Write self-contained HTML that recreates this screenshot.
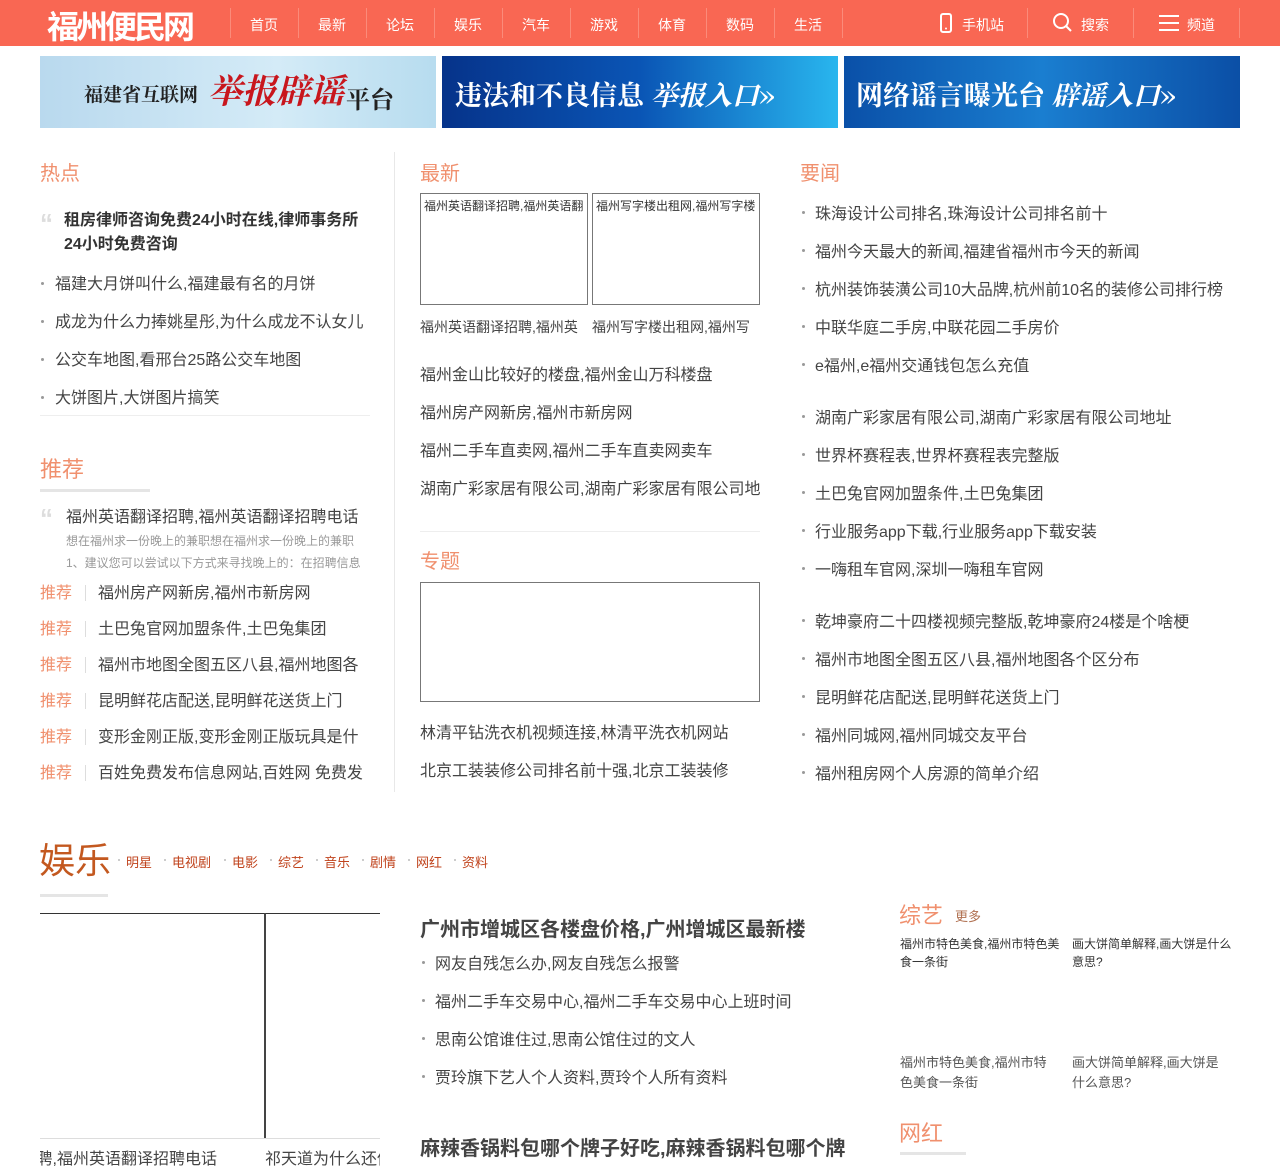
<!DOCTYPE html>
<html><head><meta charset="utf-8">
<style>
*{margin:0;padding:0;box-sizing:border-box}
body{width:1280px;height:1167px;position:relative;overflow:hidden;background:#fff;font-family:"Liberation Sans","Noto Sans CJK SC",sans-serif;color:#444}
.a{position:absolute;white-space:nowrap}
.hd{position:absolute;left:0;top:0;width:1280px;height:46px;background:#f96753}
.nav{color:#fff;font-size:14px;top:15px}
.sep{position:absolute;top:8px;width:1px;height:30px;background:#fb8b7a}
.t{font-size:20px;color:#f0906e;margin-top:-2px}
.li{font-size:16px;color:#444;margin-top:-3px}
.dot{position:absolute;width:3px;height:3px;border-radius:50%;background:#999}
.rec{font-size:16px;color:#f0906e;margin-top:-3px}
.bar{position:absolute;height:3px;background:#e5e5e5}
.sl{position:absolute;top:852px;font-size:13px;color:#c0431c}
.sd{position:absolute;top:859px;width:2px;height:2px;background:#ccc}
</style></head><body>
<div class="hd"></div>
<div class="a" style="left:47px;top:2px;font-size:32px;font-weight:bold;color:#fff;letter-spacing:-3px">福州便民网</div>
<div class="sep" style="left:230px"></div>
<div class="a nav" style="left:250px">首页</div><div class="sep" style="left:298px"></div>
<div class="a nav" style="left:318px">最新</div><div class="sep" style="left:366px"></div>
<div class="a nav" style="left:386px">论坛</div><div class="sep" style="left:434px"></div>
<div class="a nav" style="left:454px">娱乐</div><div class="sep" style="left:502px"></div>
<div class="a nav" style="left:522px">汽车</div><div class="sep" style="left:570px"></div>
<div class="a nav" style="left:590px">游戏</div><div class="sep" style="left:638px"></div>
<div class="a nav" style="left:658px">体育</div><div class="sep" style="left:706px"></div>
<div class="a nav" style="left:726px">数码</div><div class="sep" style="left:774px"></div>
<div class="a nav" style="left:794px">生活</div><div class="sep" style="left:842px"></div>
<svg class="a" style="left:939px;top:13px" width="14" height="20"><rect x="2" y="1" width="10" height="18" rx="2" fill="none" stroke="#fff" stroke-width="2"/><circle cx="7" cy="15.5" r="1" fill="#fff"/></svg>
<div class="a nav" style="left:962px">手机站</div><div class="sep" style="left:1027px"></div>
<svg class="a" style="left:1052px;top:12px" width="20" height="20"><circle cx="9" cy="9" r="7" fill="none" stroke="#fff" stroke-width="2"/><line x1="14" y1="14" x2="19" y2="19" stroke="#fff" stroke-width="2"/></svg>
<div class="a nav" style="left:1081px">搜索</div><div class="sep" style="left:1133px"></div>
<svg class="a" style="left:1158px;top:14px" width="22" height="18"><path d="M1 2H21M1 9H21M1 16H21" stroke="#fff" stroke-width="2"/></svg>
<div class="a nav" style="left:1187px">频道</div><div class="sep" style="left:1239px"></div>

<div class="a" style="left:40px;top:56px;width:396px;height:72px;background:linear-gradient(90deg,#b9d9ee,#d4ebf7 60%,#b7dcef)"></div>
<div class="a" style="left:84px;top:80px;font-size:19px;font-weight:bold;color:#222;font-family:'Noto Serif CJK SC',serif">福建省互联网</div>
<div class="a" style="left:208px;top:64px;font-size:34px;font-weight:bold;color:#c8161d;font-style:italic;font-family:'Noto Serif CJK SC',serif">举报辟谣</div>
<div class="a" style="left:346px;top:80px;font-size:24px;font-weight:bold;color:#222;font-family:'Noto Serif CJK SC',serif">平台</div>
<div class="a" style="left:442px;top:56px;width:396px;height:72px;background:linear-gradient(90deg,#06338a,#0a55b5 50%,#29b6ee)"></div>
<div class="a" style="left:455px;top:74px;font-size:27px;font-weight:bold;color:#fff;font-family:'Noto Serif CJK SC',serif">违法和不良信息 <i>举报入口</i>»</div>
<div class="a" style="left:844px;top:56px;width:396px;height:72px;background:linear-gradient(90deg,#0a50a8,#1a7ed0 50%,#0b4fa6)"></div>
<div class="a" style="left:856px;top:74px;font-size:27px;font-weight:bold;color:#fff;font-family:'Noto Serif CJK SC',serif">网络谣言曝光台 <i>辟谣入口</i>»</div>

<!-- left -->
<div class="a t" style="left:40px;top:159px">热点</div>
<div class="a" style="left:40px;top:208px;font-size:26px;color:#ddd;font-weight:bold">“</div>
<div class="a" style="left:64px;top:209px;font-size:16px;font-weight:bold;color:#333;line-height:24px">租房律师咨询免费24小时在线,律师事务所<br>24小时免费咨询</div>
<div class="dot" style="left:41px;top:282px"></div><div class="a li" style="left:55px;top:273px">福建大月饼叫什么,福建最有名的月饼</div>
<div class="dot" style="left:41px;top:320px"></div><div class="a li" style="left:55px;top:311px">成龙为什么力捧姚星彤,为什么成龙不认女儿</div>
<div class="dot" style="left:41px;top:358px"></div><div class="a li" style="left:55px;top:349px">公交车地图,看邢台25路公交车地图</div>
<div class="dot" style="left:41px;top:396px"></div><div class="a li" style="left:55px;top:387px">大饼图片,大饼图片搞笑</div>
<div class="a" style="left:40px;top:415px;width:330px;height:1px;background:#eee"></div>
<div class="a t" style="left:40px;top:454px;font-size:22px">推荐</div>
<div class="bar" style="left:40px;top:489px;width:110px"></div>
<div class="a" style="left:40px;top:503px;font-size:26px;color:#ddd;font-weight:bold">“</div>
<div class="a li" style="left:66px;top:506px">福州英语翻译招聘,福州英语翻译招聘电话</div>
<div class="a" style="left:66px;top:530px;font-size:12px;color:#999;line-height:22px">想在福州求一份晚上的兼职想在福州求一份晚上的兼职<br>1、建议您可以尝试以下方式来寻找晚上的：在招聘信息</div>
<div class="a rec" style="left:40px;top:582px">推荐</div><div class="a" style="left:85px;top:585px;width:1px;height:16px;background:#ddd"></div><div class="a li" style="left:98px;top:582px">福州房产网新房,福州市新房网</div>
<div class="a rec" style="left:40px;top:618px">推荐</div><div class="a" style="left:85px;top:621px;width:1px;height:16px;background:#ddd"></div><div class="a li" style="left:98px;top:618px">土巴兔官网加盟条件,土巴兔集团</div>
<div class="a rec" style="left:40px;top:654px">推荐</div><div class="a" style="left:85px;top:657px;width:1px;height:16px;background:#ddd"></div><div class="a li" style="left:98px;top:654px">福州市地图全图五区八县,福州地图各</div>
<div class="a rec" style="left:40px;top:690px">推荐</div><div class="a" style="left:85px;top:693px;width:1px;height:16px;background:#ddd"></div><div class="a li" style="left:98px;top:690px">昆明鲜花店配送,昆明鲜花送货上门</div>
<div class="a rec" style="left:40px;top:726px">推荐</div><div class="a" style="left:85px;top:729px;width:1px;height:16px;background:#ddd"></div><div class="a li" style="left:98px;top:726px">变形金刚正版,变形金刚正版玩具是什</div>
<div class="a rec" style="left:40px;top:762px">推荐</div><div class="a" style="left:85px;top:765px;width:1px;height:16px;background:#ddd"></div><div class="a li" style="left:98px;top:762px">百姓免费发布信息网站,百姓网 免费发</div>
<div class="a" style="left:394px;top:152px;width:1px;height:640px;background:#e8e8e8"></div>

<!-- middle -->
<div class="a t" style="left:420px;top:159px">最新</div>
<div class="a" style="left:420px;top:193px;width:168px;height:112px;border:1px solid #777;font-size:12px;color:#333;padding:3px 3px;overflow:hidden">福州英语翻译招聘,福州英语翻</div>
<div class="a" style="left:592px;top:193px;width:168px;height:112px;border:1px solid #777;font-size:12px;color:#333;padding:3px 3px;overflow:hidden">福州写字楼出租网,福州写字楼</div>
<div class="a" style="left:420px;top:317px;font-size:14px;color:#444">福州英语翻译招聘,福州英</div>
<div class="a" style="left:592px;top:317px;font-size:14px;color:#444">福州写字楼出租网,福州写</div>
<div class="a li" style="left:420px;top:364px">福州金山比较好的楼盘,福州金山万科楼盘</div>
<div class="a li" style="left:420px;top:402px">福州房产网新房,福州市新房网</div>
<div class="a li" style="left:420px;top:440px">福州二手车直卖网,福州二手车直卖网卖车</div>
<div class="a li" style="left:420px;top:478px">湖南广彩家居有限公司,湖南广彩家居有限公司地</div>
<div class="a" style="left:420px;top:531px;width:340px;height:1px;background:#eee"></div>
<div class="a t" style="left:420px;top:547px">专题</div>
<div class="a" style="left:420px;top:582px;width:340px;height:120px;border:1px solid #777"></div>
<div class="a li" style="left:420px;top:722px">林清平钻洗衣机视频连接,林清平洗衣机网站</div>
<div class="a li" style="left:420px;top:760px">北京工装装修公司排名前十强,北京工装装修</div>

<!-- right -->
<div class="a t" style="left:800px;top:159px">要闻</div>
<div class="dot" style="left:802px;top:211px"></div><div class="a li" style="left:815px;top:203px">珠海设计公司排名,珠海设计公司排名前十</div>
<div class="dot" style="left:802px;top:249px"></div><div class="a li" style="left:815px;top:241px">福州今天最大的新闻,福建省福州市今天的新闻</div>
<div class="dot" style="left:802px;top:287px"></div><div class="a li" style="left:815px;top:279px">杭州装饰装潢公司10大品牌,杭州前10名的装修公司排行榜</div>
<div class="dot" style="left:802px;top:325px"></div><div class="a li" style="left:815px;top:317px">中联华庭二手房,中联花园二手房价</div>
<div class="dot" style="left:802px;top:363px"></div><div class="a li" style="left:815px;top:355px">e福州,e福州交通钱包怎么充值</div>
<div class="dot" style="left:802px;top:415px"></div><div class="a li" style="left:815px;top:407px">湖南广彩家居有限公司,湖南广彩家居有限公司地址</div>
<div class="dot" style="left:802px;top:453px"></div><div class="a li" style="left:815px;top:445px">世界杯赛程表,世界杯赛程表完整版</div>
<div class="dot" style="left:802px;top:491px"></div><div class="a li" style="left:815px;top:483px">土巴兔官网加盟条件,土巴兔集团</div>
<div class="dot" style="left:802px;top:529px"></div><div class="a li" style="left:815px;top:521px">行业服务app下载,行业服务app下载安装</div>
<div class="dot" style="left:802px;top:567px"></div><div class="a li" style="left:815px;top:559px">一嗨租车官网,深圳一嗨租车官网</div>
<div class="dot" style="left:802px;top:619px"></div><div class="a li" style="left:815px;top:611px">乾坤豪府二十四楼视频完整版,乾坤豪府24楼是个啥梗</div>
<div class="dot" style="left:802px;top:657px"></div><div class="a li" style="left:815px;top:649px">福州市地图全图五区八县,福州地图各个区分布</div>
<div class="dot" style="left:802px;top:695px"></div><div class="a li" style="left:815px;top:687px">昆明鲜花店配送,昆明鲜花送货上门</div>
<div class="dot" style="left:802px;top:733px"></div><div class="a li" style="left:815px;top:725px">福州同城网,福州同城交友平台</div>
<div class="dot" style="left:802px;top:771px"></div><div class="a li" style="left:815px;top:763px">福州租房网个人房源的简单介绍</div>

<!-- 娱乐 -->
<div class="a" style="left:39px;top:832px;font-size:36px;color:#c3581f">娱乐</div>
<div class="sd" style="left:118px"></div><div class="sl" style="left:126px">明星</div>
<div class="sd" style="left:164px"></div><div class="sl" style="left:172px">电视剧</div>
<div class="sd" style="left:224px"></div><div class="sl" style="left:232px">电影</div>
<div class="sd" style="left:270px"></div><div class="sl" style="left:278px">综艺</div>
<div class="sd" style="left:316px"></div><div class="sl" style="left:324px">音乐</div>
<div class="sd" style="left:362px"></div><div class="sl" style="left:370px">剧情</div>
<div class="sd" style="left:408px"></div><div class="sl" style="left:416px">网红</div>
<div class="sd" style="left:454px"></div><div class="sl" style="left:462px">资料</div>
<div class="bar" style="left:40px;top:894px;width:68px"></div>
<div class="a" style="left:40px;top:913px;width:340px;height:1px;background:#333"></div>
<div class="a" style="left:264px;top:913px;width:2px;height:226px;background:#444"></div>
<div class="a" style="left:40px;top:1138px;width:340px;height:1px;background:#ddd"></div>
<div class="a li" style="left:40px;top:1148px;width:177px;overflow:hidden;direction:rtl">福州英语翻译招聘,福州英语翻译招聘电话</div>
<div class="a li" style="left:265px;top:1148px;width:115px;overflow:hidden">祁天道为什么还俗</div>
<div class="a" style="left:420px;top:913px;font-size:20px;font-weight:bold;color:#444">广州市增城区各楼盘价格,广州增城区最新楼</div>
<div class="dot" style="left:422px;top:961px"></div><div class="a li" style="left:435px;top:953px">网友自残怎么办,网友自残怎么报警</div>
<div class="dot" style="left:422px;top:999px"></div><div class="a li" style="left:435px;top:991px">福州二手车交易中心,福州二手车交易中心上班时间</div>
<div class="dot" style="left:422px;top:1037px"></div><div class="a li" style="left:435px;top:1029px">思南公馆谁住过,思南公馆住过的文人</div>
<div class="dot" style="left:422px;top:1075px"></div><div class="a li" style="left:435px;top:1067px">贾玲旗下艺人个人资料,贾玲个人所有资料</div>
<div class="a" style="left:420px;top:1132px;font-size:20px;font-weight:bold;color:#444">麻辣香锅料包哪个牌子好吃,麻辣香锅料包哪个牌</div>
<div class="a" style="left:899px;top:898px;font-size:22px;color:#f0906e">综艺</div>
<div class="a" style="left:955px;top:906px;font-size:13px;color:#b07050">更多</div>
<div class="a" style="left:900px;top:935px;font-size:12px;color:#333;line-height:18px">福州市特色美食,福州市特色美<br>食一条街</div>
<div class="a" style="left:1072px;top:935px;font-size:12px;color:#333;line-height:18px">画大饼简单解释,画大饼是什么<br>意思?</div>
<div class="a" style="left:900px;top:1053px;font-size:13px;color:#555;line-height:20px">福州市特色美食,福州市特<br>色美食一条街</div>
<div class="a" style="left:1072px;top:1053px;font-size:13px;color:#555;line-height:20px">画大饼简单解释,画大饼是<br>什么意思?</div>
<div class="a" style="left:899px;top:1116px;font-size:22px;color:#f0906e">网红</div>
<div class="bar" style="left:900px;top:1152px;width:66px"></div>
</body></html>
